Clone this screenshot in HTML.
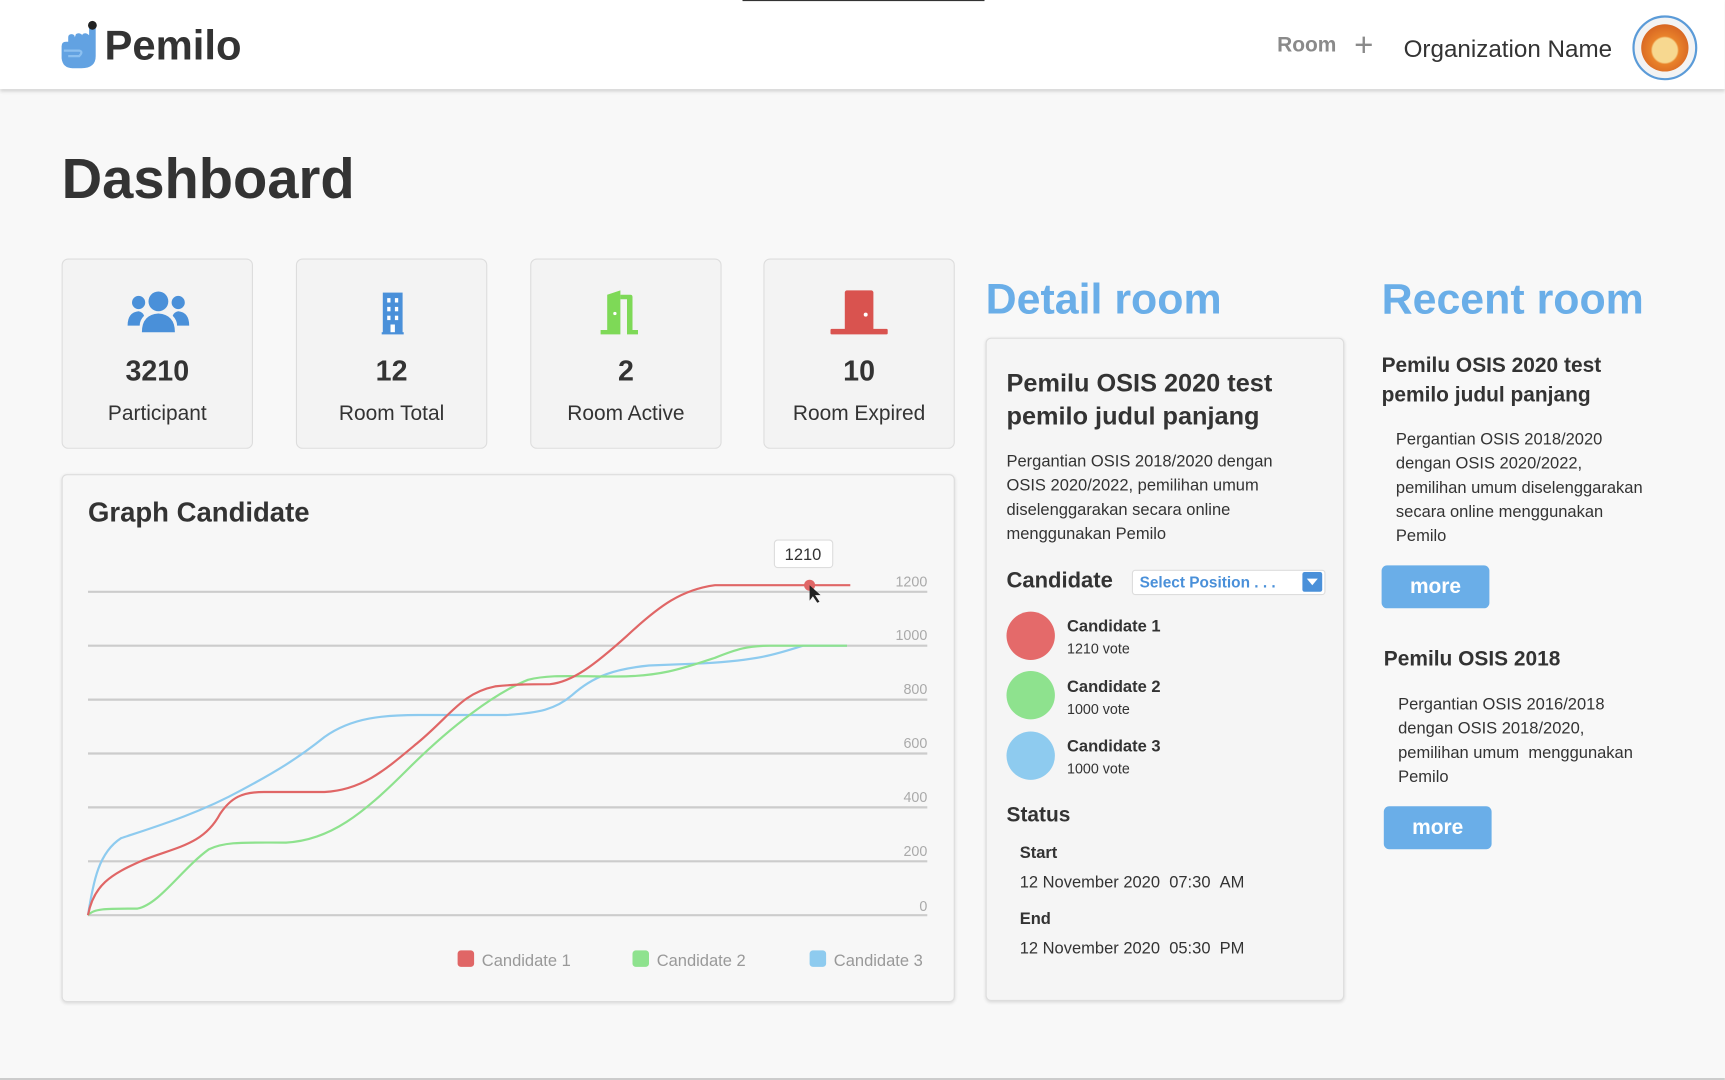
<!DOCTYPE html>
<html><head><meta charset="utf-8"><style>
*{margin:0;padding:0;box-sizing:border-box}
html,body{width:1725px;height:1080px;overflow:hidden;background:#f8f8f8}
#w{position:absolute;left:0;top:0;width:1568px;height:982px;transform:scale(1.1);transform-origin:0 0;font-family:"Liberation Sans",sans-serif;color:#333}
.a{position:absolute;white-space:nowrap}
.hdr{position:absolute;left:0;top:0;width:1568px;height:81px;background:#fff;box-shadow:0 2px 3px rgba(0,0,0,.15)}
.card{position:absolute;top:235px;width:174px;height:173px;background:#f3f3f3;border:1px solid #ddd;border-radius:6px;text-align:center}
.card .n{position:absolute;left:0;right:0;top:86px;font-size:26px;font-weight:bold;color:#333}
.card .l{position:absolute;left:0;right:0;top:130px;font-size:19px;color:#333}
.card svg{position:absolute;left:57px;top:26px}
.panel{position:absolute;background:#f5f5f5;border:1px solid #ddd;border-radius:5px;box-shadow:0 1px 3px rgba(0,0,0,.12)}
.bt{position:absolute;width:98px;height:39px;background:#6aaee8;border-radius:5px;color:#fff;font-weight:bold;font-size:19px;text-align:center;line-height:39px}
.d{font-size:15px;line-height:22px;color:#333}
</style></head><body><div id="w">
<div class="hdr"></div>
<div class="a" style="left:675px;top:0;width:220px;height:1px;background:#333"></div>
<svg class="a" style="left:54px;top:17px" width="36" height="46" viewBox="0 0 36 46">
<path d="M27 8 L33 8 L33 34 Q33 45 20 45 L12 45 Q3 45 2 36 L2 25 Q2 21 6 21 L8 21 L8 17 Q8 14 11 14 Q14 14 14 17 L15 14 Q18 12 21 15 L21 14 Q24 12 27 15 Z" fill="#62a2e2"/>
<circle cx="30" cy="6" r="4" fill="#222"/>
<path d="M4 29 L18 29 Q22 30 18 34 L8 34" fill="none" stroke="#8cc0f0" stroke-width="2"/>
</svg>
<div class="a" style="left:95px;top:21px;font-size:38px;font-weight:bold;color:#333">Pemilo</div>
<div class="a" style="left:1161px;top:31px;font-size:19px;font-weight:bold;color:#8a8a8a">Room</div>
<div class="a" style="left:1231px;top:25px;font-size:30px;color:#8a8a8a">+</div>
<div class="a" style="left:1276px;top:32px;font-size:22px;color:#333">Organization Name</div>
<div class="a" style="left:1484px;top:14px;width:59px;height:59px;border:2px solid #5b9bd8;border-radius:50%;background:#f3f3f3"></div>
<div class="a" style="left:1492px;top:22px;width:43px;height:43px;border-radius:50%;background:radial-gradient(circle at 50% 55%,#f7d890 0 35%,#e9822a 40%,#c9501c 100%)"></div>
<div class="a" style="left:56px;top:133px;font-size:51px;font-weight:bold;color:#333">Dashboard</div>

<div class="card" style="left:56px"><svg width="60" height="44" viewBox="0 0 60 44"><circle cx="30" cy="12" r="9" fill="#4a90d9"/><circle cx="12" cy="13" r="6" fill="#4a90d9"/><circle cx="48" cy="13" r="6" fill="#4a90d9"/><path d="M15 40 Q15 24 30 23 Q45 24 45 40 Z" fill="#4a90d9"/><path d="M2 34 Q2 22 12 21 Q16 22 17 25 Q13 29 13 34 Z M58 34 Q58 22 48 21 Q44 22 43 25 Q47 29 47 34 Z" fill="#4a90d9"/></svg><div class="n">3210</div><div class="l">Participant</div></div>
<div class="card" style="left:269px"><svg width="60" height="44" viewBox="0 0 60 44"><rect x="21" y="4" width="18" height="37" fill="#4a90d9"/><rect x="20" y="40" width="20" height="2" fill="#4a90d9"/><g fill="#fff"><rect x="25" y="9" width="3" height="4"/><rect x="32" y="9" width="3" height="4"/><rect x="25" y="17" width="3" height="4"/><rect x="32" y="17" width="3" height="4"/><rect x="25" y="25" width="3" height="4"/><rect x="32" y="25" width="3" height="4"/><rect x="28" y="33" width="4" height="7"/></g></svg><div class="n">12</div><div class="l">Room Total</div></div>
<div class="card" style="left:482px"><svg width="60" height="44" viewBox="0 0 60 44"><path d="M6 38 L12 38 L12 6 L24 2 L24 42 L6 42 Z" fill="#7ed957"/><path d="M24 6 L33 6 Q35 6 35 8 L35 38 L40 38 L40 42 L30 42 L30 10 L24 10 Z" fill="#7ed957"/><circle cx="19" cy="23" r="1.5" fill="#fff"/></svg><div class="n">2</div><div class="l">Room Active</div></div>
<div class="card" style="left:694px"><svg width="60" height="44" viewBox="0 0 60 44"><rect x="16" y="2" width="26" height="38" rx="2" fill="#d9534f"/><rect x="3" y="37" width="52" height="5" rx="1" fill="#d9534f"/><circle cx="35" cy="24" r="1.8" fill="#fff"/></svg><div class="n">10</div><div class="l">Room Expired</div></div>

<div class="panel" style="left:56px;top:431px;width:812px;height:480px;background:#f7f7f7"></div>
<div class="a" style="left:80px;top:452px;font-size:25px;font-weight:bold;color:#333">Graph Candidate</div>
<svg class="a" style="left:0;top:0" width="1568" height="982">
<g stroke="#ccc" stroke-width="2"><line x1="80" y1="538" x2="843" y2="538"/><line x1="80" y1="587" x2="843" y2="587"/><line x1="80" y1="636" x2="843" y2="636"/><line x1="80" y1="685" x2="843" y2="685"/><line x1="80" y1="734" x2="843" y2="734"/><line x1="80" y1="783" x2="843" y2="783"/><line x1="80" y1="832" x2="843" y2="832"/></g>
<g font-family="Liberation Sans,sans-serif" font-size="13" fill="#aaa" text-anchor="end"><text x="843" y="533">1200</text><text x="843" y="582">1000</text><text x="843" y="631">800</text><text x="843" y="680">600</text><text x="843" y="729">400</text><text x="843" y="778">200</text><text x="843" y="828">0</text></g>
<g fill="none" stroke-width="2" stroke-linejoin="round">
<path stroke="#8ecbef" d="M80 832 C85 800 90 775 110 762 C140 752 180 740 220 718 C250 702 270 690 295 670 C320 652 350 650 380 650 L460 650 C490 648 505 645 520 632 C540 614 560 608 590 605 L640 603 C690 600 705 595 730 587 L770 587"/>
<path stroke="#8ee28e" d="M80 832 C85 826 95 826 125 826 C145 822 165 790 190 772 C205 765 220 766 260 766 C300 764 330 740 370 700 C410 660 450 630 480 618 C500 613 520 615 560 615 C600 615 620 608 650 598 C670 590 680 587 700 587 L770 587"/>
<path stroke="#e06666" d="M80 832 C85 805 100 795 130 782 C160 770 185 768 200 740 C210 725 220 720 240 720 L295 720 C330 718 350 700 380 675 C410 650 420 630 450 624 C470 622 480 622 500 622 C520 620 540 605 570 578 C600 550 620 536 650 532 L773 532"/>
</g>
<circle cx="736" cy="532" r="5" fill="#e06666"/>
<path d="M736 532 L736 546 L739 542 L743 548 L745 547 L741 541 L746 541 Z" fill="#222"/>
<rect x="704" y="491" width="53" height="25" rx="3" fill="#fff" stroke="#ddd"/>
<text x="730" y="509" font-family="Liberation Sans,sans-serif" font-size="15" fill="#333" text-anchor="middle">1210</text>
<g font-family="Liberation Sans,sans-serif" font-size="15" fill="#999">
<rect x="416" y="864" width="15" height="15" rx="3" fill="#e06666"/><text x="438" y="878">Candidate 1</text>
<rect x="575" y="864" width="15" height="15" rx="3" fill="#8ee28e"/><text x="597" y="878">Candidate 2</text>
<rect x="736" y="864" width="15" height="15" rx="3" fill="#8ecbef"/><text x="758" y="878">Candidate 3</text></g>
</svg>

<div class="a" style="left:896px;top:251px;font-size:39px;font-weight:bold;color:#6aaee8">Detail room</div>
<div class="panel" style="left:896px;top:307px;width:326px;height:603px"></div>
<div class="a" style="left:915px;top:333px;font-size:23px;font-weight:bold;line-height:30px;color:#333">Pemilu OSIS 2020 test<br>pemilo judul panjang</div>
<div class="a d" style="left:915px;top:409px">Pergantian OSIS 2018/2020 dengan<br>OSIS 2020/2022, pemilihan umum<br>diselenggarakan secara online<br>menggunakan Pemilo</div>
<div class="a" style="left:915px;top:517px;font-size:20px;font-weight:bold">Candidate</div>
<div class="a" style="left:1029px;top:518px;width:176px;height:23px;background:#fff;border:1px solid #ddd;border-radius:3px"></div>
<div class="a" style="left:1036px;top:521px;font-size:14px;font-weight:bold;color:#4a90d9">Select Position . . .</div>
<div class="a" style="left:1184px;top:520px;width:18px;height:18px;background:#4a90d9;border-radius:2px"></div>
<div class="a" style="left:1188px;top:526px;width:0;height:0;border-left:5px solid transparent;border-right:5px solid transparent;border-top:6px solid #fff"></div>
<div class="a" style="left:915px;top:556px;width:44px;height:44px;border-radius:50%;background:#e46a6a"></div>
<div class="a" style="left:915px;top:610px;width:44px;height:44px;border-radius:50%;background:#8ee28e"></div>
<div class="a" style="left:915px;top:665px;width:44px;height:44px;border-radius:50%;background:#8ecbef"></div>
<div class="a" style="left:970px;top:561px;font-size:15px;font-weight:bold">Candidate 1</div><div class="a" style="left:970px;top:582px;font-size:13px">1210 vote</div>
<div class="a" style="left:970px;top:616px;font-size:15px;font-weight:bold">Candidate 2</div><div class="a" style="left:970px;top:637px;font-size:13px">1000 vote</div>
<div class="a" style="left:970px;top:670px;font-size:15px;font-weight:bold">Candidate 3</div><div class="a" style="left:970px;top:691px;font-size:13px">1000 vote</div>
<div class="a" style="left:915px;top:731px;font-size:19px;font-weight:bold">Status</div>
<div class="a" style="left:927px;top:767px;font-size:15px;font-weight:bold">Start</div>
<div class="a" style="left:927px;top:794px;font-size:15px">12 November 2020&nbsp;&nbsp;07:30&nbsp;&nbsp;AM</div>
<div class="a" style="left:927px;top:827px;font-size:15px;font-weight:bold">End</div>
<div class="a" style="left:927px;top:854px;font-size:15px">12 November 2020&nbsp;&nbsp;05:30&nbsp;&nbsp;PM</div>

<div class="a" style="left:1256px;top:251px;font-size:39px;font-weight:bold;color:#6aaee8">Recent room</div>
<div class="a" style="left:1256px;top:319px;font-size:19px;font-weight:bold;line-height:27px">Pemilu OSIS 2020 test<br>pemilo judul panjang</div>
<div class="a d" style="left:1269px;top:389px">Pergantian OSIS 2018/2020<br>dengan OSIS 2020/2022,<br>pemilihan umum diselenggarakan<br>secara online menggunakan<br>Pemilo</div>
<div class="bt" style="left:1256px;top:514px">more</div>
<div class="a" style="left:1258px;top:589px;font-size:19px;font-weight:bold">Pemilu OSIS 2018</div>
<div class="a d" style="left:1271px;top:630px">Pergantian OSIS 2016/2018<br>dengan OSIS 2018/2020,<br>pemilihan umum&nbsp; menggunakan<br>Pemilo</div>
<div class="bt" style="left:1258px;top:733px">more</div>
<div class="a" style="left:0;top:980px;width:1568px;height:2px;background:#ccc"></div>
</div></body></html>
